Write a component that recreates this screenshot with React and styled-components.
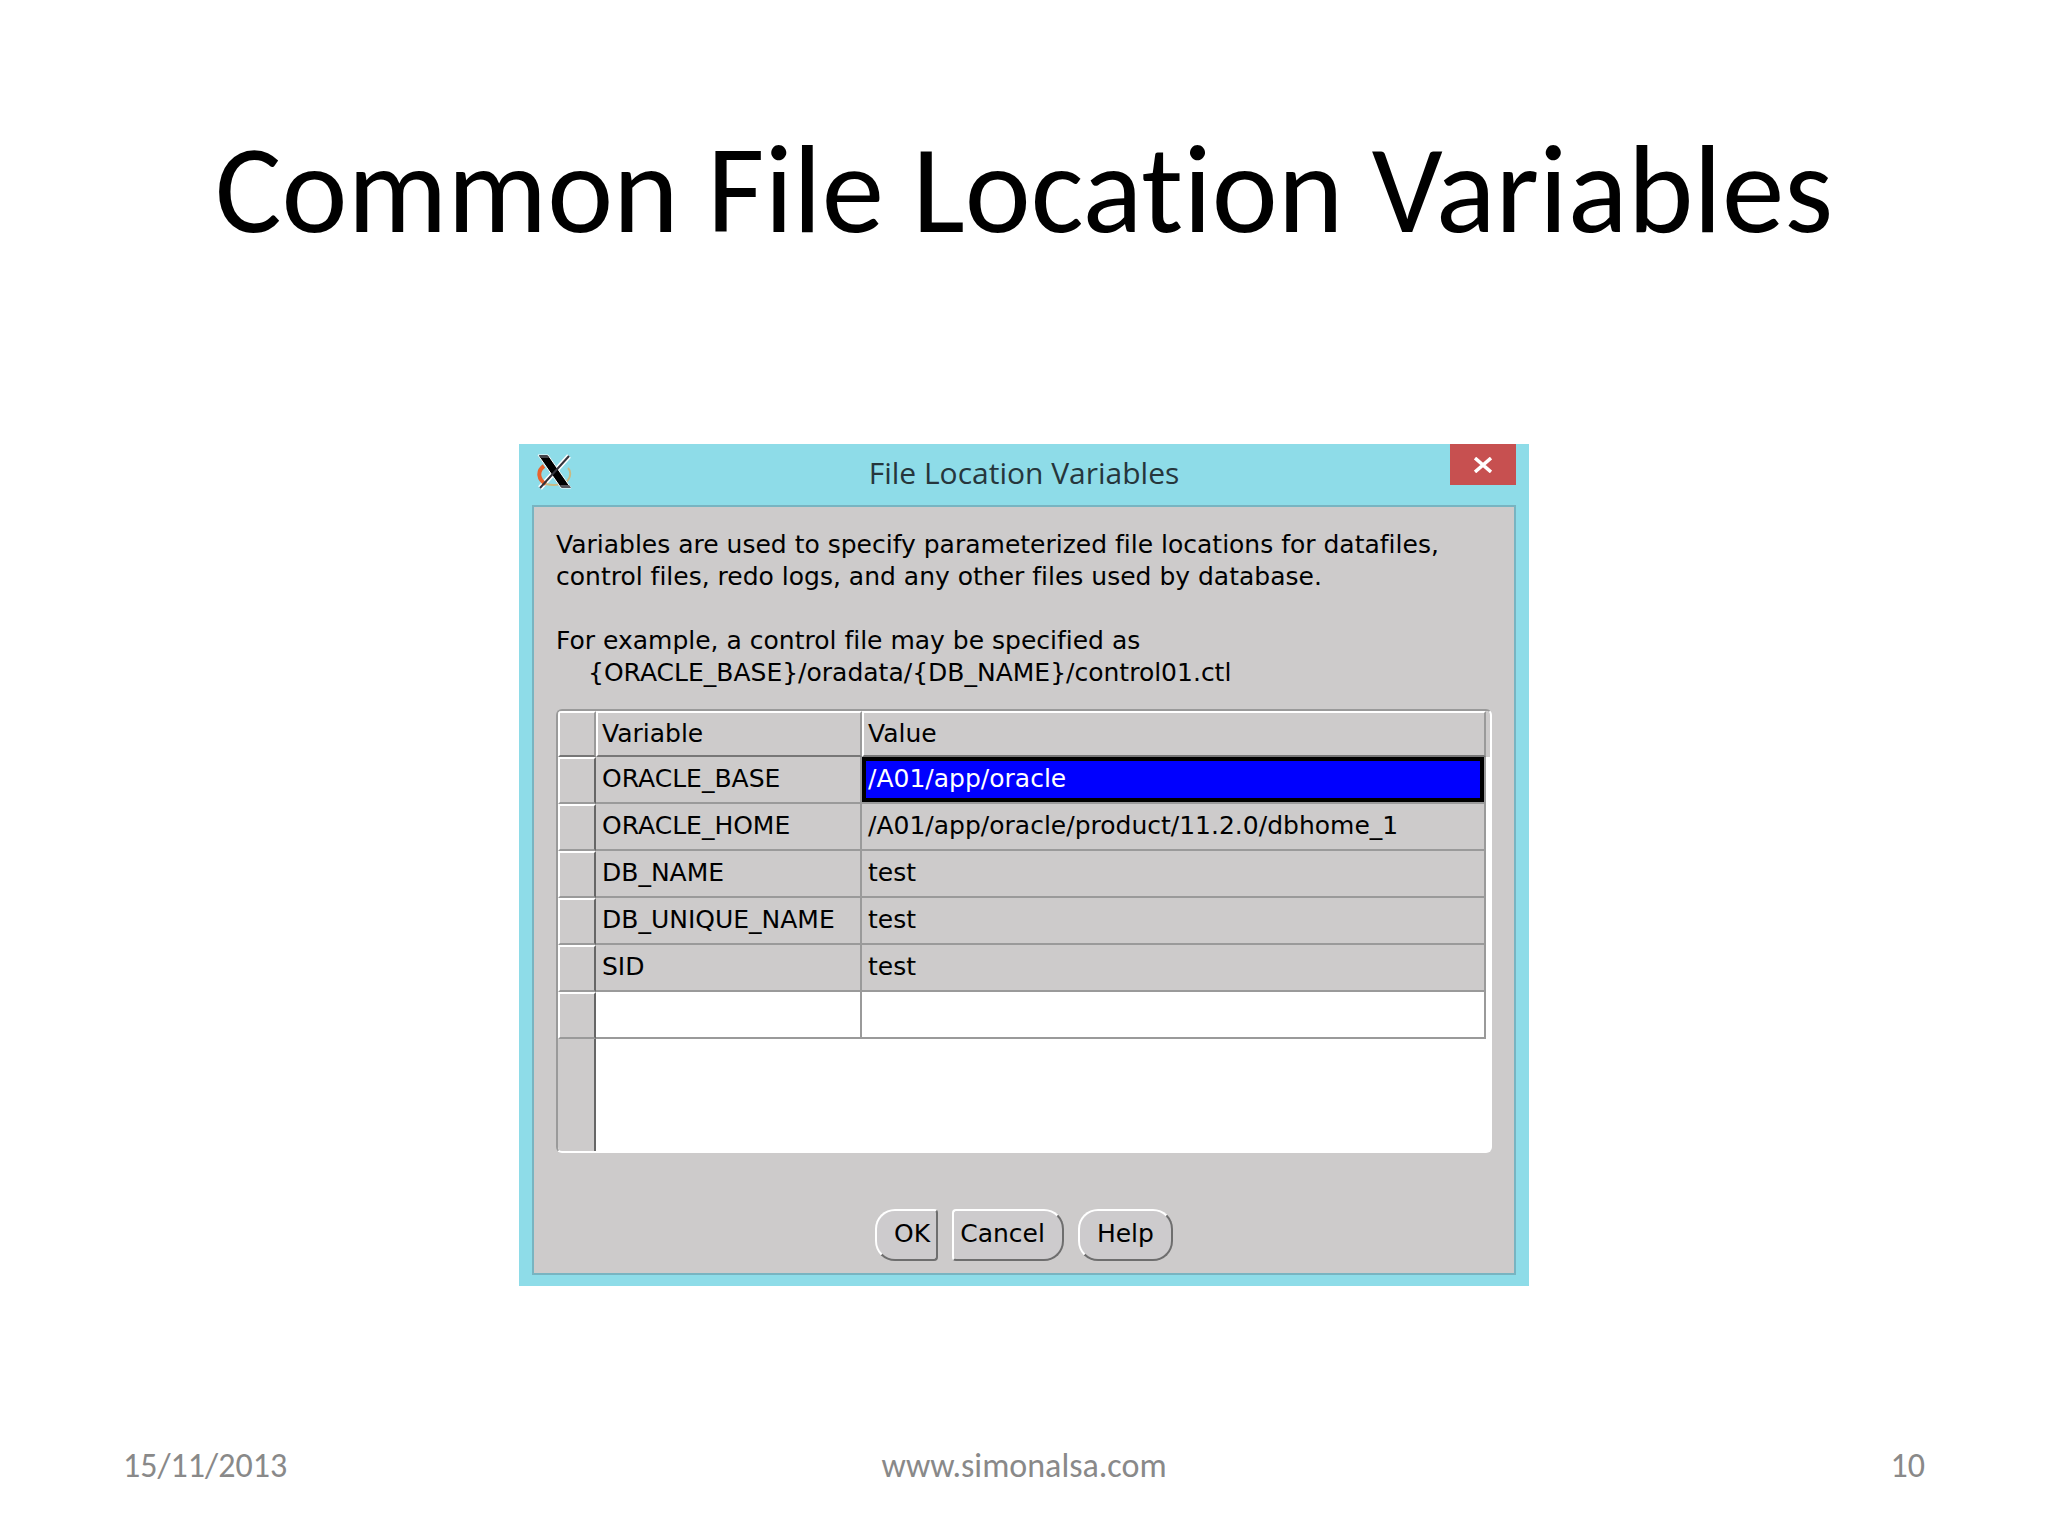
import React from "react";
import styled, { createGlobalStyle, css } from "styled-components";

const GlobalStyle = createGlobalStyle`
  * { box-sizing: border-box; }
  body { margin: 0; background: #ffffff; }
`;

const slideFont = `Carlito, Lato, "Open Sans", sans-serif`;
const uiFont = `"DejaVu Sans", "Noto Sans", sans-serif`;

const Slide = styled.main`
  display: flex;
  flex-direction: column;
  min-height: 100vh;
  padding: 118px 123px 46px;
  font-family: ${slideFont};
  font-variant-ligatures: none;
`;

const SlideTitle = styled.h1`
  margin: 0;
  font-size: 125px;
  line-height: 144px;
  font-weight: 400;
  text-align: center;
  color: #000000;
`;

const Stage = styled.div`
  flex: 1;
  display: flex;
  justify-content: center;
  align-items: flex-start;
  padding-top: 182px;
`;

const SlideFooter = styled.footer`
  display: grid;
  grid-template-columns: 1fr auto 1fr;
  align-items: center;
  font-size: 34px;
  line-height: 48px;
  color: #898989;
`;

const PageNumber = styled.span`
  text-align: right;
`;

const Dialog = styled.section`
  width: 100%;
  max-width: 1010px;
  padding: 0 13px 11px;
  background: #8edce8;
  font-family: ${uiFont};
  color: #000000;
`;

const TitleBar = styled.header`
  display: grid;
  grid-template-columns: 66px 1fr 66px;
  align-items: start;
  height: 61px;
`;

const WindowIcon = styled.svg`
  display: block;
  width: 36px;
  height: 36px;
  margin: 10px 0 0 5px;
`;

const DialogTitle = styled.h2`
  margin: 0;
  padding-top: 8px;
  font-family: "Open Sans", "Noto Sans", sans-serif;
  font-size: 30px;
  line-height: 42px;
  font-weight: 400;
  text-align: center;
  color: #26363c;
`;

const CloseButton = styled.button`
  display: flex;
  align-items: center;
  justify-content: center;
  height: 41px;
  padding: 0;
  border: 0;
  background: #c75050;
`;

const Client = styled.div`
  padding: 22px 22px 12px;
  border: 2px solid #78b4c1;
  background: #cdcbcb;
`;

const Message = styled.p`
  margin: 0 0 ${(p) => (p.$spaced ? "32px" : "0")};
  font-size: 25px;
  line-height: 32px;
`;

const Indented = styled.span`
  display: block;
  padding-left: 32px;
`;

const GridFrame = styled.div`
  display: flex;
  flex-direction: column;
  height: 444px;
  margin-top: 20px;
  border: 2px solid;
  border-color: #9a9a9a #ffffff #ffffff #9a9a9a;
  border-radius: 6px;
  background: #ffffff;
  overflow: hidden;
`;

const HeaderStrip = styled.div`
  padding-right: 4px;
  background: linear-gradient(#cdcbcb, #cdcbcb) 0 0 / 100% 46px no-repeat;
`;

const VariableTable = styled.table`
  width: 100%;
  border-collapse: separate;
  border-spacing: 0;
  table-layout: fixed;
  font-size: 25px;
  line-height: 32px;
`;

const HeadCell = styled.th`
  height: 46px;
  width: ${(p) => p.$width || "auto"};
  padding: 0 4px;
  border: 2px solid;
  border-color: #ffffff #9a9a9a #777777 #ffffff;
  background: #cdcbcb;
  font-weight: 400;
  text-align: left;
`;

const RowHead = styled.th`
  height: 47px;
  padding: 0;
  border: 2px solid;
  border-color: #ffffff #666666 #9a9a9a #ffffff;
  background: #cdcbcb;
`;

const Cell = styled.td`
  height: 47px;
  padding: 0 6px 2px;
  border: solid #9a9a9a;
  border-width: 0 2px 2px 0;
  background: ${(p) => (p.$blank ? "#ffffff" : "#cdcbcb")};
  ${(p) =>
    p.$selected &&
    css`
      background: #0000ff;
      color: #ffffff;
      box-shadow: inset 0 0 0 4px #000000;
    `}
`;

const GutterFill = styled.div`
  flex: 1;
  width: 38px;
  border-right: 2px solid #666666;
  background: #cdcbcb;
`;

const Actions = styled.div`
  display: flex;
  justify-content: center;
  gap: 14px;
  margin-top: 56px;
`;

const radii = { left: "20px 4px 4px 20px", right: "4px 20px 20px 4px", both: "20px" };
const insets = { left: "0 6px 2px 17px", right: "0 17px 2px 6px", both: "0 17px 2px" };

const ActionButton = styled.button`
  height: 52px;
  padding: ${(p) => insets[p.$round]};
  border: 2px solid;
  border-color: #ffffff #6e6e6e #6e6e6e #ffffff;
  border-radius: ${(p) => radii[p.$round]};
  background: #cdcbcd;
  font-family: ${uiFont};
  font-size: 25px;
  line-height: 32px;
  color: #000000;
`;

const rows = [
  { name: "ORACLE_BASE", value: "/A01/app/oracle", selected: true },
  { name: "ORACLE_HOME", value: "/A01/app/oracle/product/11.2.0/dbhome_1" },
  { name: "DB_NAME", value: "test" },
  { name: "DB_UNIQUE_NAME", value: "test" },
  { name: "SID", value: "test" },
  { name: "", value: "", blank: true },
];

function XLogo() {
  return (
    <WindowIcon viewBox="0 0 36 36" aria-hidden="true">
      <path d="M3 34L32 2" stroke="#ffffff" strokeWidth="5" />
      <path d="M7 12C0 17 1 26 9 30" fill="none" stroke="#e8622c" strokeWidth="4" />
      <path d="M9 30C17 32 27 31 31 26C34 22 34 17 31 14" fill="none" stroke="#c9b982" strokeWidth="2" />
      <path d="M1 1H11L34 34H24Z" fill="#000000" stroke="#ffffff" strokeWidth="1" />
      <path d="M3 34L32 2" stroke="#33333b" strokeWidth="2" />
      <path d="M2 1H10L12 4H4Z" fill="#44444a" />
      <path d="M23 31H32L34 34H25Z" fill="#55555a" />
    </WindowIcon>
  );
}

export default function App() {
  return (
    <>
      <GlobalStyle />
      <Slide>
        <SlideTitle>Common File Location Variables</SlideTitle>
        <Stage>
          <Dialog role="dialog" aria-labelledby="dialog-title">
            <TitleBar>
              <XLogo />
              <DialogTitle id="dialog-title">File Location Variables</DialogTitle>
              <CloseButton type="button" aria-label="Close">
                <svg width="18" height="16" viewBox="0 0 18 16" aria-hidden="true">
                  <path d="M1 1L17 15M17 1L1 15" stroke="#ffffff" strokeWidth="3.4" />
                </svg>
              </CloseButton>
            </TitleBar>
            <Client>
              <Message $spaced>
                Variables are used to specify parameterized file locations for datafiles,
                <br />
                control files, redo logs, and any other files used by database.
              </Message>
              <Message>
                For example, a control file may be specified as
                <Indented>{"{ORACLE_BASE}/oradata/{DB_NAME}/control01.ctl"}</Indented>
              </Message>
              <GridFrame>
                <HeaderStrip>
                  <VariableTable>
                    <thead>
                      <tr>
                        <HeadCell $width="38px" aria-label="Row" />
                        <HeadCell $width="266px" scope="col">Variable</HeadCell>
                        <HeadCell scope="col">Value</HeadCell>
                      </tr>
                    </thead>
                    <tbody>
                      {rows.map((row, i) => (
                        <tr key={i}>
                          <RowHead scope="row" aria-label={row.name || "New row"} />
                          <Cell $blank={row.blank}>{row.name}</Cell>
                          <Cell $blank={row.blank} $selected={row.selected}>{row.value}</Cell>
                        </tr>
                      ))}
                    </tbody>
                  </VariableTable>
                </HeaderStrip>
                <GutterFill />
              </GridFrame>
              <Actions>
                <ActionButton type="button" $round="left">OK</ActionButton>
                <ActionButton type="button" $round="right">Cancel</ActionButton>
                <ActionButton type="button" $round="both">Help</ActionButton>
              </Actions>
            </Client>
          </Dialog>
        </Stage>
        <SlideFooter>
          <time dateTime="2013-11-15">15/11/2013</time>
          <span>www.simonalsa.com</span>
          <PageNumber>10</PageNumber>
        </SlideFooter>
      </Slide>
    </>
  );
}
